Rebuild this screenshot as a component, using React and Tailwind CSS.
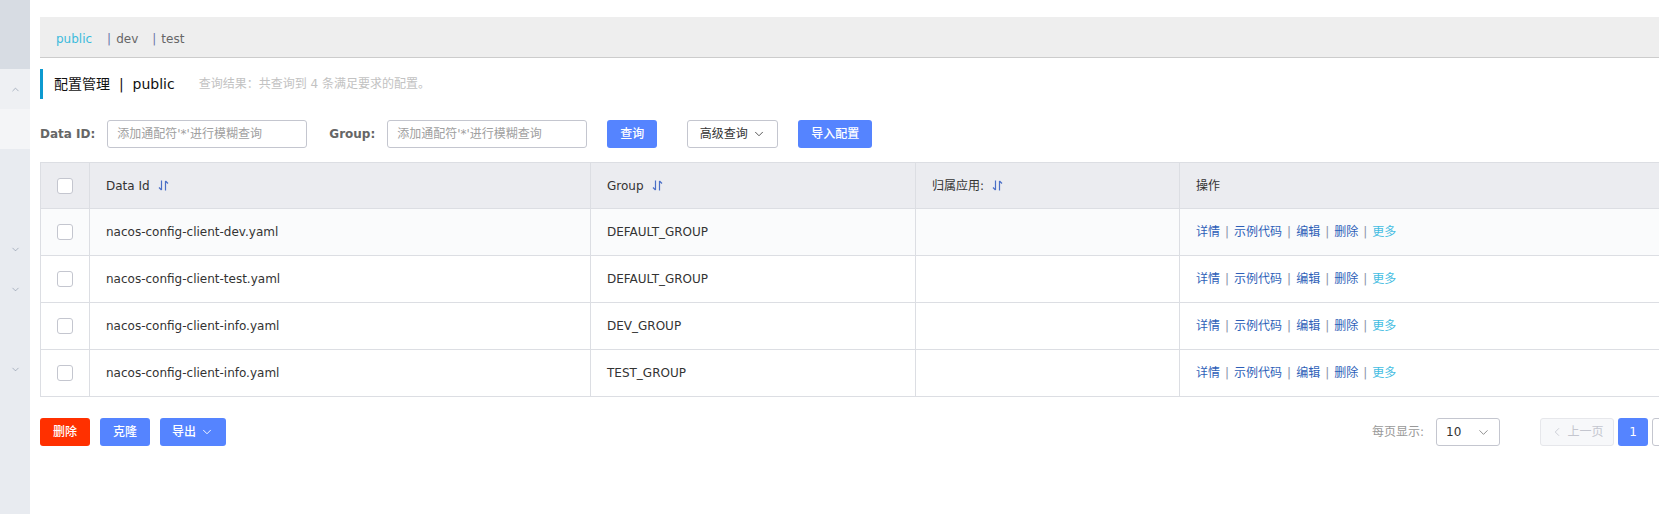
import { ChevronDown, ChevronUp, ChevronLeft } from 'lucide-react'

const rows = [
  { id: 'nacos-config-client-dev.yaml', group: 'DEFAULT_GROUP', hover: true },
  { id: 'nacos-config-client-test.yaml', group: 'DEFAULT_GROUP' },
  { id: 'nacos-config-client-info.yaml', group: 'DEV_GROUP' },
  { id: 'nacos-config-client-info.yaml', group: 'TEST_GROUP' },
]

function SortIcon() {
  return (
    <svg width="11" height="13" viewBox="0 0 11 13" className="ml-[8px]">
      <path d="M3.5 1.5v9.5M3.5 11L1 8.5" stroke="#4a6fc7" strokeWidth="1.2" fill="none" />
      <path d="M7.5 11.5V2M7.5 2L10 4.5" stroke="#4a6fc7" strokeWidth="1.2" fill="none" />
    </svg>
  )
}

function Checkbox() {
  return <div className="w-4 h-4 rounded-[3px] border border-[#c4c6cf] bg-white" />
}

function SideRow({ chevron }) {
  return (
    <div className="h-10 flex items-center justify-center">
      {chevron && <ChevronDown size={11} strokeWidth={1.3} className="text-[#7f8ca0]" />}
    </div>
  )
}

function Sep() {
  return <span className="mx-[5px] text-[#8a93a8]">|</span>
}

export default function App() {
  return (
    <div
      className="w-[1659px] h-[514px] overflow-hidden flex bg-white text-[#333]"
      style={{ fontFamily: '"DejaVu Sans", "Noto Sans CJK SC", sans-serif' }}
    >
      {/* sidebar */}
      <div className="w-[30px] flex-none flex flex-col bg-[#e8ebf0]">
        <div className="h-[69px] bg-[#d7dce3]" />
        <div className="h-10 flex items-center justify-center bg-[#eef0f3]">
          <ChevronUp size={11} strokeWidth={1.3} className="text-[#7f8ca0]" />
        </div>
        <div className="h-10 bg-[#f4f5f7]" />
        <SideRow />
        <SideRow />
        <SideRow chevron />
        <SideRow chevron />
        <SideRow />
        <SideRow chevron />
      </div>

      {/* main */}
      <div className="flex-none w-[1696px] pl-[10px] pt-[17px]">
        <div className="h-[41px] pt-[4px] bg-[#eeeeee] border-b border-[#cccccc] flex items-center pl-4 text-[12px]">
          <span className="text-[#3cbbdc]">public</span>
          <span className="ml-[15px] text-[#6b76a8]">|</span>
          <span className="ml-[5px] text-[#666]">dev</span>
          <span className="ml-[14px] text-[#6b76a8]">|</span>
          <span className="ml-[5px] text-[#666]">test</span>
        </div>

        <div className="mt-[11px] h-[30px] border-l-[3px] border-[#0d9ad0] pl-[11px] flex items-center">
          <span className="text-[14px] text-[#111]">配置管理&nbsp;&nbsp;|&nbsp;&nbsp;public</span>
          <span className="ml-[24px] text-[12px] text-[#c2c2c2]">查询结果：共查询到 4 条满足要求的配置。</span>
        </div>

        <div className="mt-[21px] h-7 flex items-center">
          <span className="text-[12px] font-bold text-[#666]">Data ID:</span>
          <div className="ml-[12px] w-[200px] h-7 border border-[#c4c6cf] rounded-[3px] flex items-center px-[9px] text-[12px] text-[#a0a0a0]">
            添加通配符'*'进行模糊查询
          </div>
          <span className="ml-[22px] text-[12px] font-bold text-[#666]">Group:</span>
          <div className="ml-[12px] w-[200px] h-7 border border-[#c4c6cf] rounded-[3px] flex items-center px-[9px] text-[12px] text-[#a0a0a0]">
            添加通配符'*'进行模糊查询
          </div>
          <button className="ml-[20px] w-[50px] h-7 rounded-[3px] bg-[#5584ff] text-white text-[12px] font-medium">查询</button>
          <button className="ml-[30px] w-[91px] h-7 rounded-[3px] border border-[#c4c6cf] bg-white text-[#333] text-[12px] flex items-center justify-center gap-[4px]">
            高级查询
            <ChevronDown size={14} strokeWidth={1.4} />
          </button>
          <button className="ml-[20px] w-[74px] h-7 rounded-[3px] bg-[#5584ff] text-white text-[12px] font-medium">导入配置</button>
        </div>

        {/* table */}
        <div className="mt-[14px] border border-[#dcdee3] text-[12px]">
          <div className="h-[46px] flex bg-[#ebecf0] border-b border-[#dcdee3]">
            <div className="w-[49px] flex-none flex items-center justify-center border-r border-[#dcdee3]">
              <Checkbox />
            </div>
            <div className="w-[501px] flex-none flex items-center pl-4 border-r border-[#dcdee3]">
              Data Id <SortIcon />
            </div>
            <div className="w-[325px] flex-none flex items-center pl-4 border-r border-[#dcdee3]">
              Group <SortIcon />
            </div>
            <div className="w-[264px] flex-none flex items-center pl-4 border-r border-[#dcdee3]">
              归属应用: <SortIcon />
            </div>
            <div className="flex-1 flex items-center pl-4">操作</div>
          </div>
          {rows.map((r, i) => (
            <div
              key={i}
              className={`flex ${i < rows.length - 1 ? 'h-[47px] border-b border-[#dcdee3]' : 'h-[46px]'} ${r.hover ? 'bg-[#fafbfc]' : 'bg-white'}`}
            >
              <div className="w-[49px] flex-none flex items-center justify-center border-r border-[#dcdee3]">
                <Checkbox />
              </div>
              <div className="w-[501px] flex-none flex items-center pl-4 border-r border-[#dcdee3]">{r.id}</div>
              <div className="w-[325px] flex-none flex items-center pl-4 border-r border-[#dcdee3]">{r.group}</div>
              <div className="w-[264px] flex-none border-r border-[#dcdee3]" />
              <div className="flex-1 flex items-center pl-4">
                <span className="text-[#2e5fb8]">详情</span>
                <Sep />
                <span className="text-[#2e5fb8]">示例代码</span>
                <Sep />
                <span className="text-[#2e5fb8]">编辑</span>
                <Sep />
                <span className="text-[#2e5fb8]">删除</span>
                <Sep />
                <span className="text-[#45bde2]">更多</span>
              </div>
            </div>
          ))}
        </div>

        {/* footer */}
        <div className="mt-[21px] h-7 flex items-center text-[12px]">
          <button className="w-[50px] h-7 rounded-[3px] bg-[#ff3000] text-white font-medium">删除</button>
          <button className="ml-[10px] w-[50px] h-7 rounded-[3px] bg-[#5584ff] text-white font-medium">克隆</button>
          <button className="ml-[10px] w-[66px] h-7 rounded-[3px] bg-[#5584ff] text-white font-medium flex items-center justify-center gap-[4px]">
            导出
            <ChevronDown size={14} strokeWidth={1.6} />
          </button>

          <div className="ml-auto flex items-center">
            <span className="text-[#999]">每页显示:</span>
            <div className="ml-[12px] w-[64px] h-7 border border-[#c4c6cf] rounded-[3px] flex items-center justify-between pl-[9px] pr-[8px] text-[#333]">
              10
              <ChevronDown size={15} strokeWidth={1.3} className="text-[#777]" />
            </div>
            <div className="ml-[40px] w-[74px] h-7 border border-[#e6e7eb] bg-[#f7f8fa] rounded-[3px] flex items-center justify-center gap-[3px] text-[#c4c6cf]">
              <ChevronLeft size={14} strokeWidth={1.4} />
              上一页
            </div>
            <div className="ml-[4px] w-[30px] h-7 rounded-[3px] bg-[#5584ff] text-white flex items-center justify-center">1</div>
            <div className="ml-[4px] w-[74px] h-7 border border-[#c4c6cf] bg-white rounded-[3px]" />
          </div>
        </div>
      </div>
    </div>
  )
}
